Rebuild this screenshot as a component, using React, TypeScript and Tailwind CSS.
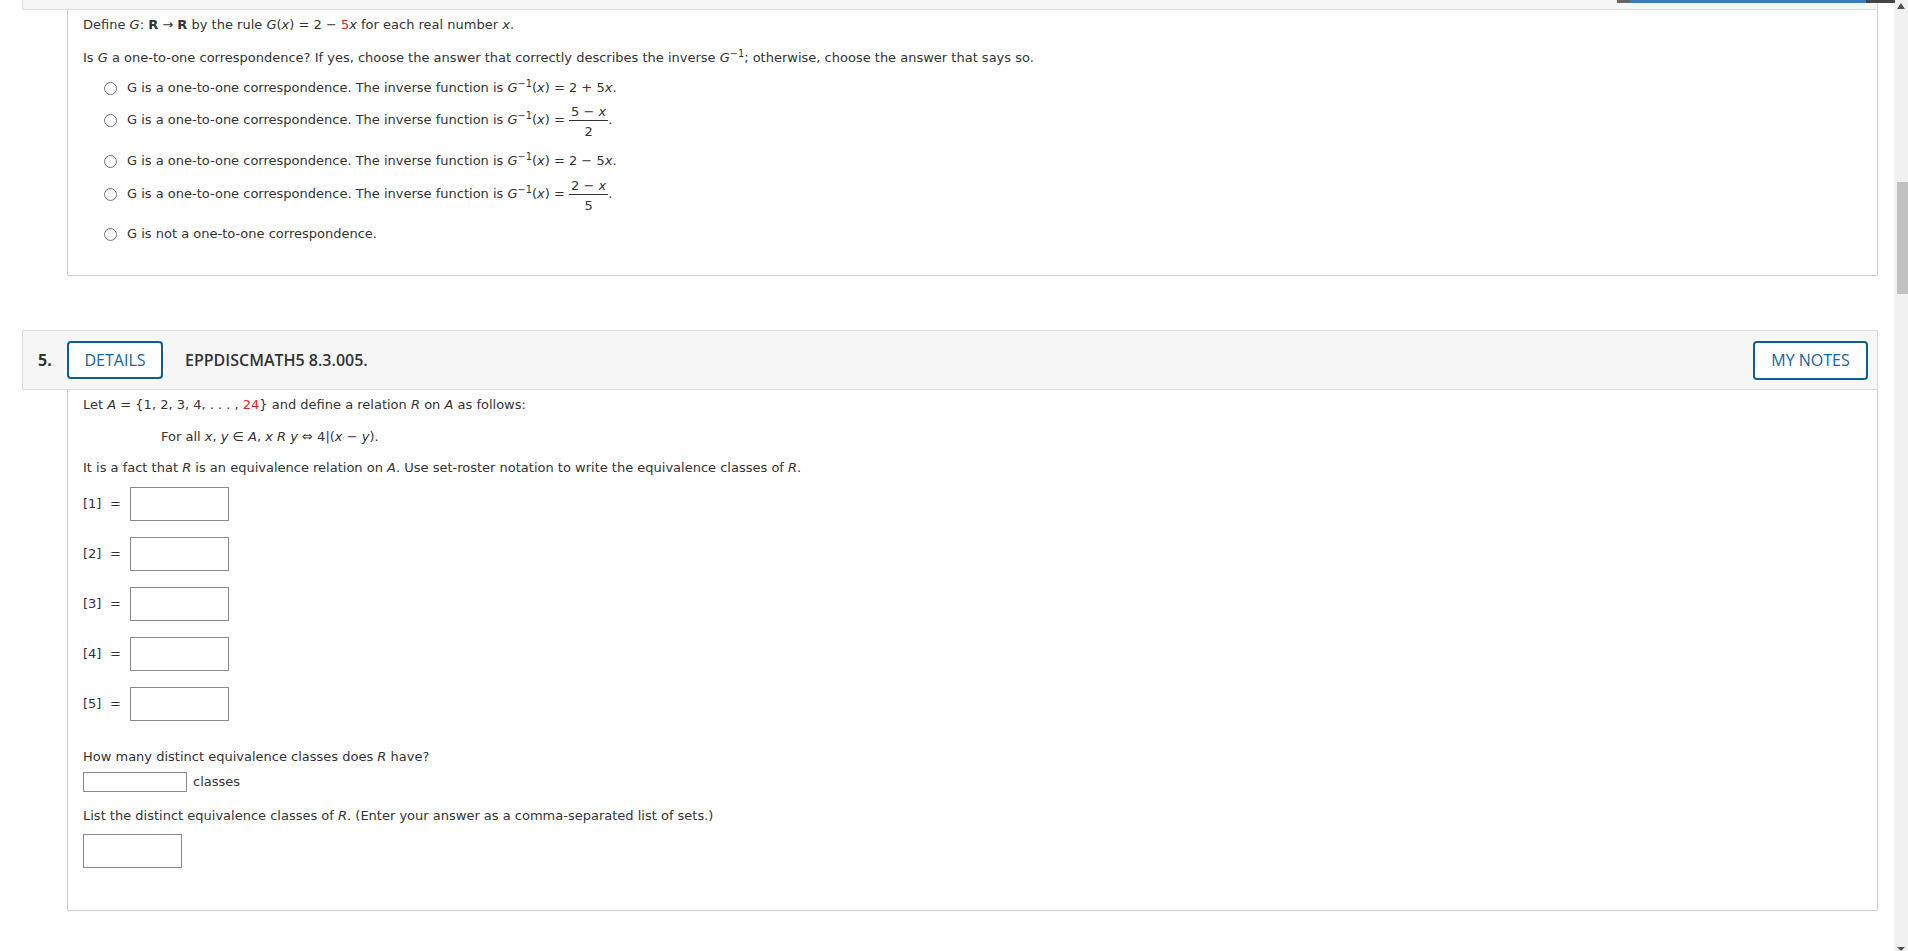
import React from "react";

const body = "font-['DejaVu_Sans',Verdana,sans-serif] text-[13px] leading-[16px] text-[#333]";

function Radio({ className = "" }: { className?: string }) {
  return <span className={"block w-[13px] h-[13px] rounded-full border border-[#767676] bg-white shrink-0 " + className} />;
}

function Frac({ num, den }: { num: React.ReactNode; den: React.ReactNode }) {
  return (
    <span className="inline-flex flex-col items-center">
      <span className="leading-[16px] px-[2px] whitespace-pre">{num}</span>
      <span className="w-full border-t border-[#333]" />
      <span className="leading-[16px] pt-[3px]">{den}</span>
    </span>
  );
}

const Ginv = () => (
  <>
    <i>G</i>
    <sup>−1</sup>(<i>x</i>)
  </>
);

function OptionLine({ children, className = "" }: { children: React.ReactNode; className?: string }) {
  return (
    <div className={"flex items-center h-[16px] ml-[21px] " + className}>
      <Radio />
      <span className="ml-[10px] whitespace-pre">{children}</span>
    </div>
  );
}

function OptionFrac({ num, den, className = "" }: { num: React.ReactNode; den: React.ReactNode; className?: string }) {
  return (
    <div className={"flex items-start h-[36px] ml-[21px] " + className}>
      <Radio className="mt-[10px]" />
      <span className="ml-[10px] mt-[8px] whitespace-pre">
        G is a one-to-one correspondence. The inverse function is <Ginv /> ={"\u00a0"}
      </span>
      <Frac num={num} den={den} />
      <span className="mt-[8px]">.</span>
    </div>
  );
}

function EqRow({ n, className = "" }: { n: number; className?: string }) {
  return (
    <div className={"flex items-center h-[34px] " + className}>
      <span className="w-[19px]">[{n}]</span>
      <span className="ml-[8px]">=</span>
      <span className="ml-[9px] block w-[99px] h-[34px] border border-[#8a8a8a] bg-white" />
    </div>
  );
}

function Button({ children, className = "" }: { children: React.ReactNode; className?: string }) {
  return (
    <div
      className={
        "flex items-center justify-center border-2 border-[#0d5d91] rounded-[4px] text-[#17649b] bg-white text-[16px] font-['Open_Sans',sans-serif] " +
        className
      }
    >
      {children}
    </div>
  );
}

export default function App() {
  return (
    <div className="w-[1908px] h-[951px] flex overflow-hidden bg-white">
      <div className="relative flex-1 pl-[22px] pr-[16px]">
        {/* top strip from previous header */}
        <div className="h-[10px] bg-[#f6f6f6] border-l border-r border-b border-[#dcdcdc]" />
        <div className="absolute top-0 left-[1617px] flex h-[3px]">
          <div className="w-[13px] bg-[#666]" />
          <div className="w-[236px] bg-[#3d7bb9]" />
          <div className="w-[29px] bg-[#444]" />
        </div>

        {/* top card */}
        <div className={"ml-[45px] border-l border-r border-b border-[#cccccc] rounded-b-[2px] pl-[15px] pt-[7px] pb-[33px] " + body}>
          <p className="whitespace-pre">
            Define <i>G</i>: <b>R</b> → <b>R</b> by the rule <i>G</i>(<i>x</i>) = 2 − <span className="text-[#e3201b]">5</span>
            <i>x</i> for each real number <i>x</i>.
          </p>
          <p className="mt-[17px] whitespace-pre">
            Is <i>G</i> a one-to-one correspondence? If yes, choose the answer that correctly describes the inverse <i>G</i>
            <sup>−1</sup>; otherwise, choose the answer that says so.
          </p>
          <OptionLine className="mt-[14px]">
            G is a one-to-one correspondence. The inverse function is <Ginv /> = 2 + 5<i>x</i>.
          </OptionLine>
          <OptionFrac
            className="mt-[8px]"
            num={
              <>
                5 − <i>x</i>
              </>
            }
            den="2"
          />
          <OptionLine className="mt-[13px]">
            G is a one-to-one correspondence. The inverse function is <Ginv /> = 2 − 5<i>x</i>.
          </OptionLine>
          <OptionFrac
            className="mt-[9px]"
            num={
              <>
                2 − <i>x</i>
              </>
            }
            den="5"
          />
          <OptionLine className="mt-[12px]">G is not a one-to-one correspondence.</OptionLine>
        </div>

        {/* section 5 header */}
        <div className="mt-[54px] h-[60px] bg-[#f6f6f6] border border-[#dcdcdc] flex items-center pl-[15px] pr-[9px] font-['Open_Sans',sans-serif] text-[#333]">
          <span className="text-[16px] font-bold w-[14px]">5.</span>
          <Button className="ml-[15px] w-[96px] h-[38px]">DETAILS</Button>
          <span className="ml-[22px] text-[16px] font-semibold">EPPDISCMATH5 8.3.005.</span>
          <div className="flex-1" />
          <Button className="w-[115px] h-[39px]">MY NOTES</Button>
        </div>

        {/* section 5 card */}
        <div className={"ml-[45px] h-[521px] border-l border-r border-b border-[#cccccc] rounded-b-[2px] pl-[15px] pt-[7px] " + body}>
          <p className="whitespace-pre">
            Let <i>A</i> = {"{"}1, 2, 3, 4, . . . , <span className="text-[#e3201b]">24</span>
            {"}"} and define a relation <i>R</i> on <i>A</i> as follows:
          </p>
          <p className="mt-[16px] ml-[78px] whitespace-pre">
            For all <i>x</i>, <i>y</i> ∈ <i>A</i>, <i>x</i> <i>R</i> <i>y</i> ⇔ 4|(<i>x</i> − <i>y</i>).
          </p>
          <p className="mt-[15px] whitespace-pre">
            It is a fact that <i>R</i> is an equivalence relation on <i>A</i>. Use set-roster notation to write the equivalence
            classes of <i>R</i>.
          </p>
          <EqRow n={1} className="mt-[11px]" />
          <EqRow n={2} className="mt-[16px]" />
          <EqRow n={3} className="mt-[16px]" />
          <EqRow n={4} className="mt-[16px]" />
          <EqRow n={5} className="mt-[16px]" />
          <p className="mt-[28px] whitespace-pre">
            How many distinct equivalence classes does <i>R</i> have?
          </p>
          <div className="mt-[7px] flex items-center h-[20px]">
            <span className="block w-[104px] h-[20px] border border-[#8a8a8a] bg-white" />
            <span className="ml-[6px]">classes</span>
          </div>
          <p className="mt-[16px] whitespace-pre">
            List the distinct equivalence classes of <i>R</i>. (Enter your answer as a comma-separated list of sets.)
          </p>
          <span className="mt-[10px] block w-[99px] h-[34px] border border-[#8a8a8a] bg-white" />
        </div>
      </div>

      {/* scrollbar */}
      <div className="w-[14px] h-full bg-[#f1f1f1] flex flex-col items-center">
        <div className="h-[12px] flex items-center justify-center">
          <svg width="8" height="6" viewBox="0 0 8 6">
            <path d="M4 0 L8 6 L0 6 Z" fill="#505050" />
          </svg>
        </div>
        <div className="mt-[170px] w-[11px] ml-[2px] h-[112px] bg-[#c1c1c1]" />
        <div className="flex-1" />
        <div className="h-[8px] flex items-end justify-center">
          <svg width="8" height="4" viewBox="0 0 8 4">
            <path d="M0 0 L8 0 L4 4 Z" fill="#505050" />
          </svg>
        </div>
      </div>
    </div>
  );
}
